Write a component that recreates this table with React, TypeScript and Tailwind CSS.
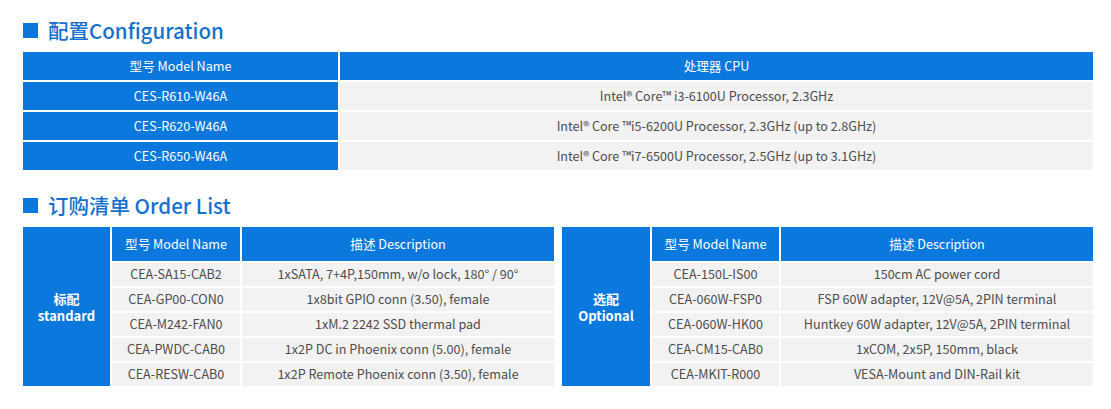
import React from "react";

const font = { fontFamily: '"Noto Sans CJK SC", "Noto Sans", sans-serif' };

const cpuRows = [
  ["CES-R610-W46A", "Intel® Core™ i3-6100U Processor, 2.3GHz"],
  ["CES-R620-W46A", "Intel® Core ™i5-6200U Processor, 2.3GHz (up to 2.8GHz)"],
  ["CES-R650-W46A", "Intel® Core ™i7-6500U Processor, 2.5GHz (up to 3.1GHz)"],
];

const standard = [
  ["CEA-SA15-CAB2", "1xSATA, 7+4P,150mm, w/o lock, 180° / 90°"],
  ["CEA-GP00-CON0", "1x8bit GPIO conn (3.50), female"],
  ["CEA-M242-FAN0", "1xM.2 2242 SSD thermal pad"],
  ["CEA-PWDC-CAB0", "1x2P DC in Phoenix conn (5.00), female"],
  ["CEA-RESW-CAB0", "1x2P Remote Phoenix conn (3.50), female"],
];

const optional = [
  ["CEA-150L-IS00", "150cm AC power cord"],
  ["CEA-060W-FSP0", "FSP 60W adapter, 12V@5A, 2PIN terminal"],
  ["CEA-060W-HK00", "Huntkey 60W adapter, 12V@5A, 2PIN terminal"],
  ["CEA-CM15-CAB0", "1xCOM, 2x5P, 150mm, black"],
  ["CEA-MKIT-R000", "VESA-Mount and DIN-Rail kit"],
];

function Heading({ children }: { children: React.ReactNode }) {
  return (
    <h2 className="flex items-center gap-[10px] h-6 text-[20.5px] leading-6 font-medium text-[#1370cc]">
      <span className="w-[15px] h-[15px] bg-[#0a78dc]" />
      {children}
    </h2>
  );
}

function OrderTable({ zh, en, rows, labelW }: { zh: string; en: string; rows: string[][]; labelW: string }) {
  return (
    <div className={`grid ${labelW} grid-rows-[34px_repeat(5,23px)] gap-[2px] flex-1`}>
      <div className="row-span-6 bg-[#0a78dc] text-white font-bold text-[13px] leading-[17px] flex flex-col items-center justify-center">
        <span>{zh}</span>
        <span>{en}</span>
      </div>
      <div className="bg-[#0a78dc] text-white text-[12.6px] flex items-center justify-center">型号 Model Name</div>
      <div className="bg-[#0a78dc] text-white text-[12.6px] flex items-center justify-center">描述 Description</div>
      {rows.map(([m, d]) => (
        <React.Fragment key={m}>
          <div className="bg-[#f2f2f2] text-[#4d4d4d] text-[12.6px] flex items-center justify-center">{m}</div>
          <div className="bg-[#f2f2f2] text-[#4d4d4d] text-[12.6px] flex items-center justify-center">{d}</div>
        </React.Fragment>
      ))}
    </div>
  );
}

export default function App() {
  return (
    <div className="w-[1111px] h-[409px] bg-white pl-[23px] pr-[18px] pt-[18px]" style={font}>
      <Heading>配置Configuration</Heading>

      <div className="mt-[10px] grid grid-cols-[315px_1fr] grid-rows-[28px_repeat(3,28px)] gap-[2px]">
        <div className="bg-[#0a78dc] text-white text-[12.6px] flex items-center justify-center">型号 Model Name</div>
        <div className="bg-[#0a78dc] text-white text-[12.6px] flex items-center justify-center">处理器 CPU</div>
        {cpuRows.map(([m, c]) => (
          <React.Fragment key={m}>
            <div className="bg-[#0a78dc] text-white text-[12.6px] flex items-center justify-center">{m}</div>
            <div className="bg-[#f2f2f2] text-[#4d4d4d] text-[12.6px] flex items-center justify-center">{c}</div>
          </React.Fragment>
        ))}
      </div>

      <div className="mt-[23px]">
        <Heading>订购清单 Order List</Heading>
      </div>

      <div className="mt-[10px] flex gap-[8px]">
        <OrderTable zh="标配" en="standard" rows={standard} labelW="grid-cols-[87px_128px_1fr]" />
        <OrderTable zh="选配" en="Optional" rows={optional} labelW="grid-cols-[88px_127px_1fr]" />
      </div>
    </div>
  );
}
